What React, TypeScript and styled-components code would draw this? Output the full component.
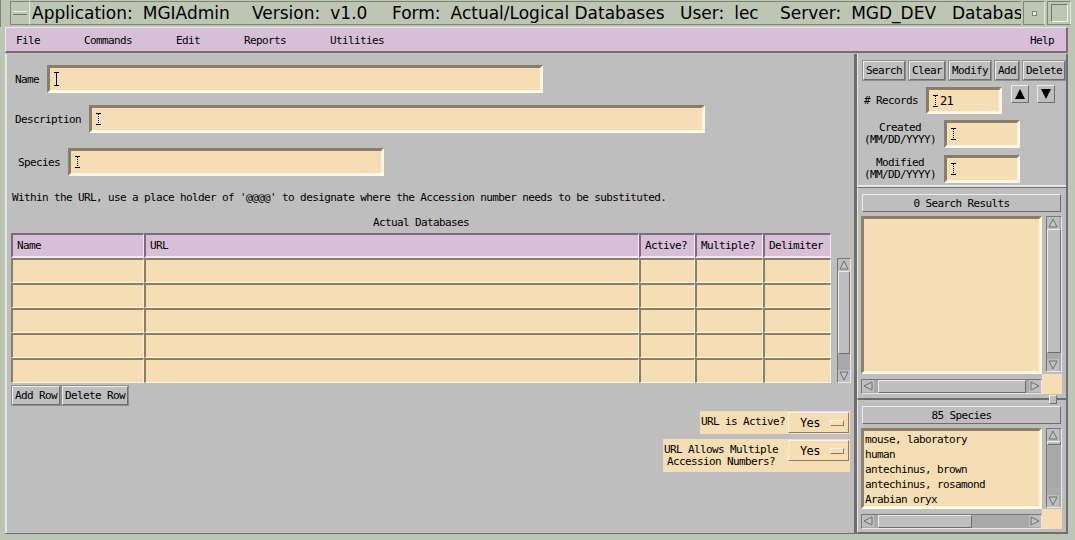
import React from 'react'
import styled, { createGlobalStyle } from 'styled-components'

const mono = `'DejaVu Sans Mono', 'Liberation Mono', monospace`

const GlobalStyle = createGlobalStyle`
    html, body {
        margin: 0;
        padding: 0;
    }
    body {
        width: 1075px;
        height: 540px;
        overflow: hidden;
        background: #bdc5b5;
        font-family: ${mono};
        font-size: 11px;
        letter-spacing: -0.62px;
        color: #000;
    }
`

function Caret({ dotted }: { dotted?: boolean }) {
    const h = dotted ? 12 : 14
    return (
        <svg width='7' height={h} style={{ flex: 'none' }}>
            <g stroke='#000' strokeWidth='1' strokeDasharray={dotted ? '1 1' : undefined}>
                <line x1='3.5' y1='1' x2='3.5' y2={h - 1} />
            </g>
            <line x1='1' y1='0.5' x2='6' y2='0.5' stroke='#000' />
            <line x1='1' y1={h - 0.5} x2='6' y2={h - 0.5} stroke='#000' />
        </svg>
    )
}

function Arrow({ dir, size = 10 }: { dir: 'up' | 'down' | 'left' | 'right'; size?: number }) {
    const s = size
    const pts = {
        up: `${s / 2},1 ${s - 1},${s - 1} 1,${s - 1}`,
        down: `1,1 ${s - 1},1 ${s / 2},${s - 1}`,
        left: `1,${s / 2} ${s - 1},1 ${s - 1},${s - 1}`,
        right: `1,1 ${s - 1},${s / 2} 1,${s - 1}`,
    }[dir]
    return (
        <svg width={s} height={s}>
            <polygon points={pts} fill='#c4c4c4' stroke='#6e6e6e' strokeWidth='1' />
        </svg>
    )
}

function VScroll({ height, thumb, top = 0 }: { height: number; thumb: number; top?: number }) {
    return (
        <VTrack style={{ height }}>
            <ArrowBox><Arrow dir='up' /></ArrowBox>
            <Trough>
                <Thumb style={{ marginTop: top, height: thumb }} />
            </Trough>
            <ArrowBox><Arrow dir='down' /></ArrowBox>
        </VTrack>
    )
}

function HScroll({ thumb }: { thumb: number }) {
    return (
        <HTrack>
            <ArrowBox><Arrow dir='left' /></ArrowBox>
            <HTrough>
                <Thumb style={{ width: thumb }} />
            </HTrough>
            <ArrowBox><Arrow dir='right' /></ArrowBox>
        </HTrack>
    )
}

const titleFields = [
    { label: 'Application:', value: 'MGIAdmin', w: 220 },
    { label: 'Version:', value: 'v1.0', w: 140 },
    { label: 'Form:', value: 'Actual/Logical Databases', w: 288 },
    { label: 'User:', value: 'lec', w: 100 },
    { label: 'Server:', value: 'MGD_DEV', w: 172 },
    { label: 'Database:', value: 'mgd', w: 200 },
]

const species = ['mouse, laboratory', 'human', 'antechinus, brown', 'antechinus, rosamond', 'Arabian oryx']

export default function App() {
    return (
        <>
            <GlobalStyle />
            <Window>
                <TitleBar>
                    <WinButton><MenuGlyph /></WinButton>
                    <TitleText>
                        {titleFields.map(f => (
                            <TitleField key={f.label} $w={f.w}>
                                <span>{f.label}</span>
                                <span>{f.value}</span>
                            </TitleField>
                        ))}
                    </TitleText>
                    <WinButton $w={22}><Dot /></WinButton>
                    <WinButton $w={24}><MaxGlyph /></WinButton>
                </TitleBar>

                <MenuBar>
                    <MenuItem>File</MenuItem>
                    <MenuItem>Commands</MenuItem>
                    <MenuItem>Edit</MenuItem>
                    <MenuItem>Reports</MenuItem>
                    <MenuItem>Utilities</MenuItem>
                    <MenuHelp>Help</MenuHelp>
                </MenuBar>

                <Body>
                    <FormPanel>
                        <FieldRow $top={11} $indent={4}>
                            <span>Name</span>
                            <Input $w={496}><Caret /></Input>
                        </FieldRow>
                        <FieldRow $top={12} $indent={4}>
                            <span>Description</span>
                            <Input $w={616}><Caret dotted /></Input>
                        </FieldRow>
                        <FieldRow $top={15} $indent={7}>
                            <span>Species</span>
                            <Input $w={316}><Caret dotted /></Input>
                        </FieldRow>

                        <InfoText>
                            Within the URL, use a place holder of '@@@@' to designate where the Accession number needs to be substituted.
                        </InfoText>
                        <TableTitle>Actual Databases</TableTitle>

                        <TableWrap>
                            <Table>
                                <HeadCell>Name</HeadCell>
                                <HeadCell>URL</HeadCell>
                                <HeadCell>Active?</HeadCell>
                                <HeadCell>Multiple?</HeadCell>
                                <HeadCell>Delimiter</HeadCell>
                                {Array.from({ length: 25 }).map((_, i) => (
                                    <Cell key={i} />
                                ))}
                            </Table>
                            <VScroll height={125} thumb={83} />
                        </TableWrap>

                        <ButtonRow>
                            <Button>Add Row</Button>
                            <Button>Delete Row</Button>
                        </ButtonRow>

                        <OptionRow $top={6}>
                            <OptionLabel>URL is Active?</OptionLabel>
                            <OptionButton>Yes<Indicator /></OptionButton>
                        </OptionRow>
                        <OptionRow $top={5}>
                            <OptionLabel $pad={7}>URL Allows Multiple<br />Accession Numbers?</OptionLabel>
                            <OptionButton>Yes<Indicator /></OptionButton>
                        </OptionRow>
                    </FormPanel>

                    <SidePanel>
                        <ControlSection>
                            <ButtonRow $gap={4}>
                                <Button>Search</Button>
                                <Button>Clear</Button>
                                <Button>Modify</Button>
                                <Button>Add</Button>
                                <Button>Delete</Button>
                            </ButtonRow>
                            <RecordsRow>
                                <span>#&nbsp;Records</span>
                                <Input $w={76} $h={27}><Caret dotted /><span>21</span></Input>
                                <ArrowButton><svg width='12' height='12'><polygon points='6,1 11,11 1,11' fill='#000' /></svg></ArrowButton>
                                <ArrowButton><svg width='12' height='12'><polygon points='1,1 11,1 6,11' fill='#000' /></svg></ArrowButton>
                            </RecordsRow>
                            <DateRow>
                                <DateLabel>Created<br />(MM/DD/YYYY)</DateLabel>
                                <Input $w={76}><Caret dotted /></Input>
                            </DateRow>
                            <DateRow>
                                <DateLabel>Modified<br />(MM/DD/YYYY)</DateLabel>
                                <Input $w={76}><Caret dotted /></Input>
                            </DateRow>
                        </ControlSection>

                        <ListSection $h={212}>
                            <ListTitle>0 Search Results</ListTitle>
                            <ScrolledList $h={158}>
                                <ListBox />
                                <VScroll height={156} thumb={124} />
                                <HScroll thumb={148} />
                                <Corner />
                            </ScrolledList>
                            <Sash />
                        </ListSection>

                        <ListSection>
                            <ListTitle>85 Species</ListTitle>
                            <ScrolledList $h={81}>
                                <ListBox>
                                    {species.map(s => (
                                        <ListItem key={s}>{s}</ListItem>
                                    ))}
                                </ListBox>
                                <VScroll height={80} thumb={4} />
                                <HScroll thumb={94} />
                                <Corner />
                            </ScrolledList>
                        </ListSection>
                    </SidePanel>
                </Body>
            </Window>
        </>
    )
}

const Window = styled.div`
    display: flex;
    flex-direction: column;
    width: 1075px;
    height: 540px;
    background: #bdc5b5;
`

const TitleBar = styled.div`
    display: flex;
    align-items: stretch;
    height: 27px;
    padding: 1px 4px 0 9px;
    box-sizing: border-box;
    border-left: 1px solid #7d8577;
`

const WinButton = styled.div<{ $w?: number }>`
    width: ${p => p.$w || 20}px;
    height: 24px;
    box-sizing: border-box;
    border: 1px solid #7d8577;
    border-right-color: #e3eadc;
    display: flex;
    align-items: center;
    justify-content: center;
    margin-left: 2px;
    &:first-child {
        margin-left: 0;
    }
`

const MenuGlyph = styled.div`
    width: 14px;
    height: 2px;
    border-top: 1px solid #e8eee2;
    border-bottom: 1px solid #6f776a;
`

const Dot = styled.div`
    width: 3px;
    height: 3px;
    border: 1px solid #7d8577;
    background: #e8eee2;
`

const MaxGlyph = styled.div`
    width: 15px;
    height: 16px;
    border: 1px solid #6f776a;
    border-right-color: #eef3e9;
    border-bottom-color: #eef3e9;
`

const TitleText = styled.div`
    flex: 1;
    display: flex;
    overflow: hidden;
    white-space: pre;
    box-sizing: border-box;
    height: 24px;
    padding-left: 2px;
    border-top: 1px solid #7d8577;
    border-bottom: 1px solid #7d8577;
    font-family: 'DejaVu Sans', Verdana, sans-serif;
    font-size: 17px;
    letter-spacing: 0;
    line-height: 22px;
    color: #000;
`

const TitleField = styled.div<{ $w: number }>`
    display: flex;
    gap: 10px;
    flex: none;
    width: ${p => p.$w}px;
`

const MenuBar = styled.div`
    display: flex;
    align-items: center;
    gap: 44px;
    height: 26px;
    margin: 0 7px 0 5px;
    padding: 1px 12px 0 10px;
    box-sizing: border-box;
    background: #d8bfd8;
    border-top: 1px solid #f2e4f2;
    border-left: 1px solid #f2e4f2;
    border-bottom: 2px solid #7b6b7b;
    border-right: 2px solid #7b6b7b;
`

const MenuItem = styled.div`
    line-height: 13px;
`

const MenuHelp = styled(MenuItem)`
    margin-left: auto;
`

const Body = styled.div`
    display: flex;
    height: 479px;
    margin: 1px 7px 0 5px;
    border-bottom: 1px solid #6e6e6e;
`

const FormPanel = styled.div`
    width: 851px;
    flex: none;
    display: flex;
    flex-direction: column;
    box-sizing: border-box;
    padding: 0 4px 0 4px;
    background: #bebebe;
    border-left: 2px solid #e6e6e6;
    border-right: 2px solid #6e6e6e;
`

const FieldRow = styled.div<{ $top: number; $indent: number }>`
    display: flex;
    align-items: center;
    gap: 8px;
    margin-top: ${p => p.$top}px;
    padding-left: ${p => p.$indent}px;
`

const Input = styled.div<{ $w: number; $h?: number }>`
    display: flex;
    align-items: center;
    gap: 1px;
    width: ${p => p.$w}px;
    height: ${p => p.$h || 28}px;
    box-sizing: border-box;
    padding-left: 3px;
    background: #f5deb3;
    border-top: 3px solid #8b7e66;
    border-left: 3px solid #8b7e66;
    border-bottom: 3px solid #fff6e3;
    border-right: 3px solid #fff6e3;
    font-size: 12px;
`

const InfoText = styled.div`
    margin: 15px 0 0 1px;
    line-height: 13px;
    white-space: nowrap;
`

const TableTitle = styled.div`
    width: 820px;
    margin-top: 12px;
    text-align: center;
    line-height: 13px;
`

const TableWrap = styled.div`
    display: flex;
    align-items: flex-end;
    gap: 6px;
    margin-top: 4px;
`

const Table = styled.div`
    display: grid;
    grid-template-columns: 133px 495px 56px 68px 68px;
    grid-auto-rows: 25px;
    width: 820px;
`

const HeadCell = styled.div`
    display: flex;
    align-items: center;
    padding-left: 4px;
    box-sizing: border-box;
    background: #d8bfd8;
    border-top: 2px solid #7b6b7b;
    border-left: 2px solid #7b6b7b;
    border-bottom: 2px solid #f5e6f5;
    border-right: 1px solid #f5e6f5;
`

const Cell = styled.div`
    box-sizing: border-box;
    background: #f5deb3;
    border-top: 2px solid #8b7e66;
    border-left: 2px solid #8b7e66;
    border-bottom: 1px solid #fff6e3;
    border-right: 1px solid #fff6e3;
`

const VTrack = styled.div`
    display: flex;
    flex-direction: column;
    width: 14px;
    box-sizing: border-box;
    background: #a9a9a9;
    border: 1px solid #777;
    border-right-color: #e8e8e8;
    border-bottom-color: #e8e8e8;
    flex: none;
`

const HTrack = styled.div`
    display: flex;
    height: 15px;
    box-sizing: border-box;
    background: #a9a9a9;
    border: 1px solid #777;
    border-right-color: #e8e8e8;
    border-bottom-color: #e8e8e8;
`

const ArrowBox = styled.div`
    width: 12px;
    height: 12px;
    flex: none;
    display: flex;
    align-items: center;
    justify-content: center;
    background: #bebebe;
`

const Trough = styled.div`
    flex: 1;
    display: flex;
    flex-direction: column;
`

const HTrough = styled.div`
    flex: 1;
    display: flex;
    padding-left: 4px;
`

const Thumb = styled.div`
    box-sizing: border-box;
    min-width: 4px;
    flex: none;
    align-self: stretch;
    background: #bebebe;
    border: 1px solid #ececec;
    border-right-color: #6e6e6e;
    border-bottom-color: #6e6e6e;
`

const ButtonRow = styled.div<{ $gap?: number }>`
    display: flex;
    gap: ${p => p.$gap || 2}px;
    margin: 3px 0 0 1px;
`

const Button = styled.div`
    height: 19px;
    display: flex;
    align-items: center;
    padding: 0 2px;
    box-sizing: border-box;
    background: #bebebe;
    border: 1px solid #ececec;
    border-right-color: #6e6e6e;
    border-bottom-color: #6e6e6e;
    outline: 1px solid #8e8e8e;
    font-size: 11px;
    line-height: 13px;
`

const OptionRow = styled.div<{ $top: number }>`
    align-self: flex-end;
    display: flex;
    align-items: flex-start;
    gap: 3px;
    margin-top: ${p => p.$top}px;
    padding: 1px;
    background: #f5deb3;
`

const OptionLabel = styled.div<{ $pad?: number }>`
    text-align: center;
    line-height: 12px;
    padding: 4px ${p => p.$pad || 0}px 3px 0;
    white-space: nowrap;
`

const OptionButton = styled.div`
    display: flex;
    align-items: center;
    width: 61px;
    height: 21px;
    box-sizing: border-box;
    padding: 0 4px 0 11px;
    border: 1px solid #fff8ea;
    border-right-color: #8b7e66;
    border-bottom-color: #8b7e66;
    font-size: 12px;
`

const Indicator = styled.div`
    width: 12px;
    height: 4px;
    margin-left: auto;
    border: 1px solid #fff8ea;
    border-right-color: #8b7e66;
    border-bottom-color: #8b7e66;
`

const SidePanel = styled.div`
    flex: 1;
    display: flex;
    flex-direction: column;
    background: #bebebe;
    border-left: 1px solid #6e6e6e;
    border-right: 2px solid #6e6e6e;
`

const ControlSection = styled.div`
    height: 133px;
    box-sizing: border-box;
    padding: 4px 0 0 4px;
    border-bottom: 2px solid #e6e6e6;
    border-left: 1px solid #e6e6e6;
`

const RecordsRow = styled.div`
    display: flex;
    align-items: flex-start;
    margin: 5px 0 0 2px;
    height: 29px;
    & > span {
        margin-top: 9px;
        width: 62px;
        white-space: nowrap;
    }
    & > div:nth-child(2) {
        margin-top: 2px;
        margin-right: 9px;
    }
`

const ArrowButton = styled.div`
    width: 18px;
    height: 18px;
    box-sizing: border-box;
    display: flex;
    align-items: center;
    justify-content: center;
    margin-right: 8px;
    background: #bebebe;
    border: 1px solid #ececec;
    border-right-color: #6e6e6e;
    border-bottom-color: #6e6e6e;
`

const DateRow = styled.div`
    display: flex;
    align-items: center;
    gap: 8px;
    margin: 6px 0 0 2px;
    height: 28px;
    & + & {
        margin-top: 7px;
    }
`

const DateLabel = styled.div`
    width: 72px;
    text-align: center;
    line-height: 12px;
    white-space: nowrap;
`

const ListSection = styled.div<{ $h?: number }>`
    position: relative;
    ${p => (p.$h ? `height: ${p.$h}px;` : 'flex: 1;')}
    box-sizing: border-box;
    padding: 6px 0 0 4px;
    border-top: 1px solid #6e6e6e;
    border-left: 1px solid #e6e6e6;
    border-bottom: 1px solid #6e6e6e;
`

const ListTitle = styled.div`
    width: 199px;
    height: 18px;
    box-sizing: border-box;
    display: flex;
    align-items: center;
    justify-content: center;
    border: 1px solid #ececec;
    border-right-color: #6e6e6e;
    border-bottom-color: #6e6e6e;
`

const ScrolledList = styled.div<{ $h: number }>`
    display: grid;
    grid-template-columns: 181px 20px;
    grid-template-rows: ${p => p.$h}px 20px;
    margin: 4px 0 0 -1px;
    & > ${VTrack} {
        margin-left: 4px;
        width: 16px;
    }
    & > ${HTrack} {
        margin-top: 5px;
    }
`

const ListBox = styled.div`
    box-sizing: border-box;
    padding: 1px 0 0 1px;
    background: #f5deb3;
    border-top: 3px solid #8b7e66;
    border-left: 3px solid #8b7e66;
    border-bottom: 3px solid #fff6e3;
    border-right: 3px solid #fff6e3;
    overflow: hidden;
`

const ListItem = styled.div`
    line-height: 15px;
    white-space: nowrap;
`

const Corner = styled.div`
    background: #f5deb3;
`

const Sash = styled.div`
    position: absolute;
    left: 191px;
    bottom: -6px;
    width: 8px;
    height: 9px;
    box-sizing: border-box;
    background: #bebebe;
    border: 1px solid #ececec;
    border-right-color: #6e6e6e;
    border-bottom-color: #6e6e6e;
    z-index: 2;
`
